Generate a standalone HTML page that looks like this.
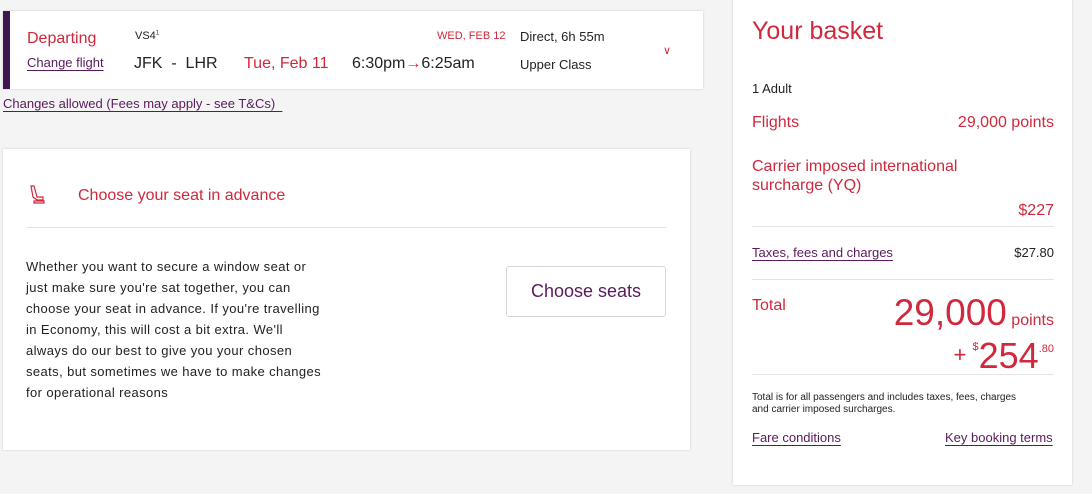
<!DOCTYPE html>
<html><head><meta charset="utf-8"><style>
body{margin:0;width:1092px;height:494px;background:#f4f4f4;font-family:"Liberation Sans",sans-serif;position:relative;overflow:hidden;color:#222}
.a{position:absolute;white-space:nowrap}
.r{position:absolute;white-space:nowrap;right:38px;text-align:right}
.red{color:#d0283c}
.pur{color:#5a1a5e}
.u{text-decoration:underline;text-underline-offset:3px}
.card{position:absolute;background:#fff;box-shadow:0 0 2px rgba(0,0,0,.18)}
.hr{position:absolute;height:1px;background:#e3e3e3}
</style></head><body>
<div class="card" style="left:3px;top:11px;width:700px;height:78px">
 <div style="position:absolute;left:0;top:0;width:7px;height:78px;background:#3f1650"></div>
</div>
<div class="a red" style="left:27px;top:30px;font-size:16px">Departing</div>
<div class="a pur u" style="left:27px;top:55px;font-size:13px">Change flight</div>
<div class="a" style="left:135px;top:30px;font-size:11px">VS4<sup style="font-size:6px">1</sup></div>
<div class="a" style="left:134px;top:55px;font-size:16px">JFK &nbsp;- &nbsp;LHR</div>
<div class="a red" style="left:244px;top:55px;font-size:16px">Tue, Feb 11</div>
<div class="a" style="left:352px;top:55px;font-size:16px">6:30pm<span class="red">→</span>6:25am</div>
<div class="a red" style="left:437px;top:30px;font-size:11px">WED, FEB 12</div>
<div class="a" style="left:520px;top:29px;font-size:13px">Direct, 6h 55m</div>
<div class="a" style="left:520px;top:57px;font-size:13px">Upper Class</div>
<div class="a red" style="left:663px;top:44px;font-size:11px">&#x2228;</div>
<div class="a pur u" style="left:3px;top:96px;font-size:13px">Changes allowed (Fees may apply - see T&amp;Cs)&nbsp;&nbsp;</div>

<div class="card" style="left:3px;top:149px;width:687px;height:301px"></div>
<svg class="a" style="left:28px;top:184px" width="20" height="22" viewBox="0 0 20 22" fill="none" stroke="#d0283c" stroke-width="1.2"><path d="M3 2h3l3 11h6v3H9l-4-3z"/><path d="M6 17h10v2H6z"/></svg>
<div class="a red" style="left:78px;top:187px;font-size:16px">Choose your seat in advance</div>
<div class="hr" style="left:26px;top:227px;width:640px"></div>
<div class="a" style="left:26px;top:256px;font-size:13px;line-height:21px;letter-spacing:0.4px">Whether you want to secure a window seat or<br>just make sure you're sat together, you can<br>choose your seat in advance. If you're travelling<br>in Economy, this will cost a bit extra. We'll<br>always do our best to give you your chosen<br>seats, but sometimes we have to make changes<br>for operational reasons</div>
<div class="a pur" style="left:506px;top:266px;width:158px;height:49px;border:1px solid #d6d6d6;border-radius:3px;font-size:18px;line-height:49px;text-align:center">Choose seats</div>

<div class="card" style="left:733px;top:-2px;width:339px;height:487px"></div>
<div class="a red" style="left:752px;top:17px;font-size:25px">Your basket</div>
<div class="a" style="left:752px;top:81px;font-size:13px">1 Adult</div>
<div class="a red" style="left:752px;top:114px;font-size:16px">Flights</div>
<div class="r red" style="top:114px;font-size:16px">29,000 points</div>
<div class="a red" style="left:752px;top:157px;font-size:16px;line-height:19px">Carrier imposed international<br>surcharge (YQ)</div>
<div class="r red" style="top:202px;font-size:16px">$227</div>
<div class="hr" style="left:752px;top:226px;width:302px"></div>
<div class="a pur u" style="left:752px;top:245px;font-size:13px">Taxes, fees and charges</div>
<div class="r" style="top:245px;font-size:13px">$27.80</div>
<div class="hr" style="left:752px;top:279px;width:302px"></div>
<div class="a red" style="left:752px;top:297px;font-size:16px">Total</div>
<div class="r red" style="top:292px;font-size:37px">29,000<span style="font-size:16px"> points</span></div>
<div class="r red" style="top:335px;font-size:36px"><span style="font-size:22px;vertical-align:6px">+ </span><sup style="font-size:11px;vertical-align:18px">$</sup>254<sup style="font-size:11px;vertical-align:16px">.80</sup></div>
<div class="hr" style="left:752px;top:374px;width:302px"></div>
<div class="a" style="left:752px;top:392px;font-size:10px;line-height:12px">Total is for all passengers and includes taxes, fees, charges<br>and carrier imposed surcharges.</div>
<div class="a pur u" style="left:752px;top:430px;font-size:13px">Fare conditions</div>
<div class="a pur u" style="left:945px;top:430px;font-size:13px">Key booking terms</div>
</body></html>
